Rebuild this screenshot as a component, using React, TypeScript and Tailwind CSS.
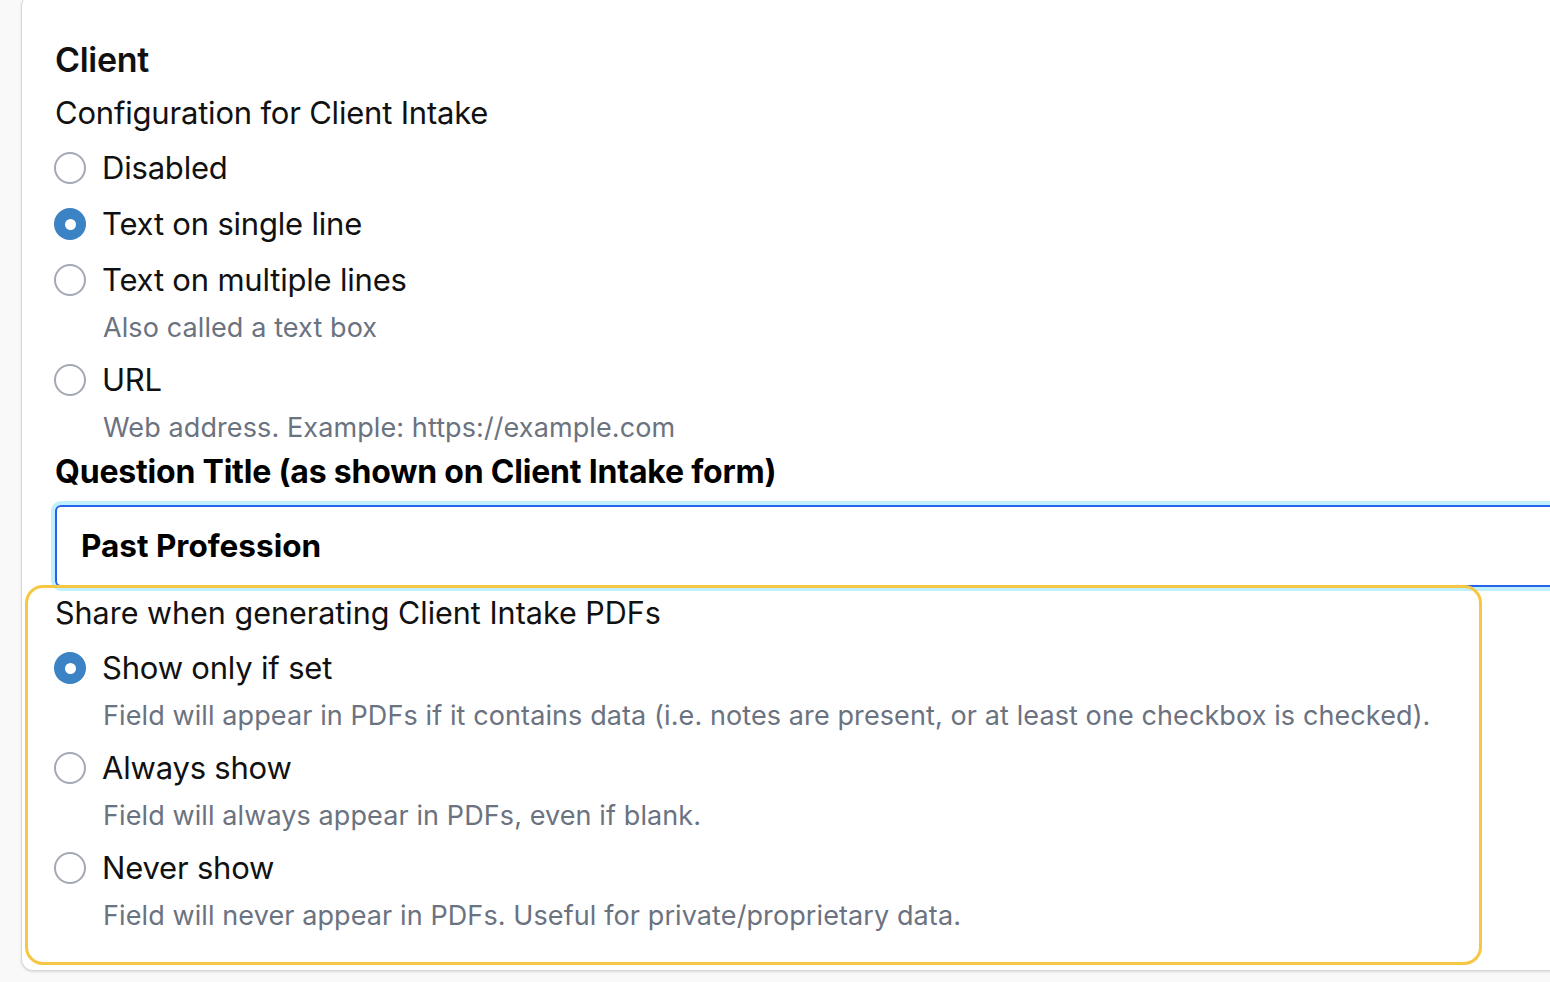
import React from 'react';

type Option = { label: string; description?: string; checked?: boolean };

const intakeOptions: Option[] = [
  { label: 'Disabled' },
  { label: 'Text on single line', checked: true },
  { label: 'Text on multiple lines', description: 'Also called a text box' },
  { label: 'URL', description: 'Web address. Example: https://example.com' },
];

const shareOptions: Option[] = [
  {
    label: 'Show only if set',
    checked: true,
    description:
      'Field will appear in PDFs if it contains data (i.e. notes are present, or at least one checkbox is checked).',
  },
  { label: 'Always show', description: 'Field will always appear in PDFs, even if blank.' },
  { label: 'Never show', description: 'Field will never appear in PDFs. Useful for private/proprietary data.' },
];

function Radio({ checked }: { checked?: boolean }) {
  if (checked) {
    return (
      <span className="w-8 h-8 rounded-full bg-[#3b83c4] flex items-center justify-center shrink-0">
        <span className="w-[11px] h-[11px] rounded-full bg-white"></span>
      </span>
    );
  }
  return <span className="w-8 h-8 rounded-full border-2 border-[#a3a8b4] bg-white shrink-0"></span>;
}

function RadioList({ options }: { options: Option[] }) {
  return (
    <div className="flex flex-col gap-2">
      {options.map((o) => (
        <div key={o.label}>
          <label className="flex items-center gap-4 h-12 -ml-px cursor-pointer">
            <Radio checked={o.checked} />
            <span className="text-[31px] leading-[48px] tracking-[-0.2px] text-[#111111]">{o.label}</span>
          </label>
          {o.description && (
            <p className="pl-[48px] mt-[6px] pb-[2px] text-[27px] leading-[36px] tracking-[0.1px] text-[#6b7280]">
              {o.description}
            </p>
          )}
        </div>
      ))}
    </div>
  );
}

export default function App() {
  return (
    <div
      className="w-full h-[982px] overflow-hidden bg-[#f9f9f9]"
      style={{ fontFamily: 'Inter, "Noto Sans", sans-serif' }}
    >
      <div className="ml-[21px] -mt-[6px] w-[1700px] bg-white border border-[#d5d8de] rounded-xl shadow-sm pl-[33px] pt-[43px] pb-[5px]">
        {/* Field header */}
        <h2 className="text-[34px] leading-[44px] font-semibold text-[#111111] tracking-[-0.3px]">Client</h2>
        <p className="mt-[7px] text-[31px] leading-[48px] tracking-[-0.2px] text-[#111111]">
          Configuration for Client Intake
        </p>

        <div className="mt-[7px]">
          <RadioList options={intakeOptions} />
        </div>

        {/* Question title */}
        <label className="block mt-[2px] text-[32px] leading-[44px] tracking-[-0.2px] font-bold text-black">
          Question Title (as shown on Client Intake form)
        </label>
        <div className="mt-[11px] h-[82px] w-[1600px] rounded-md border-2 border-[#2563eb] shadow-[0_0_0_4px_#bff0fb] flex items-center pl-[24px]">
          <span className="text-[31.5px] font-bold text-black">Past Profession</span>
        </div>

        {/* Share settings */}
        <div className="relative -mt-[2px] -ml-[30px] w-[1457px] border-[3px] border-[#f6c744] rounded-[18px] pl-[27px] pt-[3px] pb-[26px]">
          <p className="text-[30.5px] leading-[44px] text-[#111111]">Share when generating Client Intake PDFs</p>
          <div className="mt-[9px]">
            <RadioList options={shareOptions} />
          </div>
        </div>
      </div>
    </div>
  );
}
